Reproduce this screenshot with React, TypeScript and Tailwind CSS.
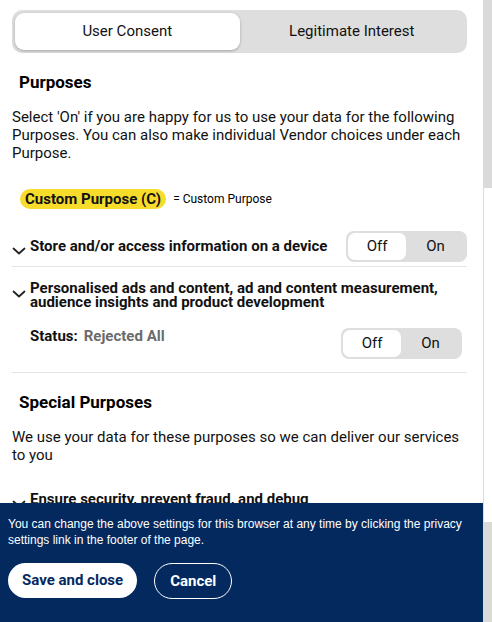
const bodyFont = "font-['Roboto',sans-serif]";

function Toggle({ className = '' }: { className?: string }) {
  return (
    <div className={`flex h-[31px] w-[121px] shrink-0 rounded-[8px] bg-[#dedede] p-[2px] ${className}`}>
      <div className="flex w-[58px] items-center justify-center rounded-[7px] bg-white text-[15px] text-[#111]">Off</div>
      <div className="flex flex-1 items-center justify-center text-[15px] text-[#111]">On</div>
    </div>
  );
}

function Chevron() {
  return (
    <svg viewBox="0 0 14 8" className="mt-[9px] h-[8px] w-[14px] shrink-0" fill="none" stroke="#222" strokeWidth={1.8} strokeLinecap="round" strokeLinejoin="round">
      <path d="M1.5 1.5 7 6.5l5.5-5" />
    </svg>
  );
}

export default function App() {
  return (
    <div className={`relative flex h-[622px] w-[492px] overflow-hidden bg-white ${bodyFont}`}>
      <div className="relative flex-1 overflow-hidden">
        <div className="pl-3 pr-4 pt-[10px]">
          {/* tabs */}
          <div className="grid h-[43px] grid-cols-2 rounded-[10px] bg-[#dedede] p-[3px]">
            <button className="rounded-[9px] bg-white text-[15px] text-[#111] shadow-[0_1px_3px_rgba(0,0,0,0.25)]">User Consent</button>
            <button className="text-[15px] text-[#111]">Legitimate Interest</button>
          </div>

          <h2 className="ml-[7px] mt-[17px] text-[17px] font-bold text-black">Purposes</h2>
          <p className="mt-[12px] text-[15px] leading-[18px] text-[#111]">
            Select 'On' if you are happy for us to use your data for the following Purposes. You can also make individual Vendor choices under each Purpose.
          </p>

          <div className="mt-[27px] flex items-center gap-[7px] pl-[8px]">
            <span className="rounded-full bg-[#f8dc2c] px-[5px] text-[15px] font-bold leading-[20px] text-[#111]">Custom Purpose (C)</span>
            <span className="text-[12px] text-black">= Custom Purpose</span>
          </div>

          {/* purpose 1 */}
          <div className="mt-[22px] flex items-center border-b border-[#e4e4e4] pb-[4px]">
            <div className="flex flex-1 items-start gap-[4px]">
              <Chevron />
              <span className="text-[15px] font-bold leading-[16px] text-[#111]">Store and/or access information on a device</span>
            </div>
            <Toggle />
          </div>

          {/* purpose 2 */}
          <div className="border-b border-[#e4e4e4] pb-[13px] pt-[14px]">
            <div className="flex items-start gap-[4px]">
              <Chevron />
              <span className="text-[15px] font-bold leading-[14px] text-[#111]">
                Personalised ads and content, ad and content measurement, audience insights and product development
              </span>
            </div>
            <div className="mt-[16px] flex items-start pl-[18px] pr-[5px]">
              <div className="flex flex-1 gap-[6px] text-[15px] font-bold">
                <span className="text-[#111]">Status:</span>
                <span className="text-[#6b6b6b]">Rejected All</span>
              </div>
              <Toggle className="mt-[3px]" />
            </div>
          </div>

          <h2 className="ml-[7px] mt-[17px] text-[17px] font-bold text-black">Special Purposes</h2>
          <p className="mt-[13px] text-[15px] leading-[18px] text-[#111]">
            We use your data for these purposes so we can deliver our services to you
          </p>

          <div className="mt-[27px] flex items-start gap-[4px]">
            <Chevron />
            <span className="text-[15px] font-bold leading-[16px] text-[#111]">Ensure security, prevent fraud, and debug</span>
          </div>
        </div>

        {/* sticky footer */}
        <div className="absolute bottom-0 left-0 right-0 h-[119px] bg-[#03295f] px-2 pt-[13px]">
          <p className="font-['Liberation_Sans',Arial,sans-serif] text-[12px] leading-[16px] text-white">
            You can change the above settings for this browser at any time by clicking the privacy settings link in the footer of the page.
          </p>
          <div className="mt-[15px] flex gap-[17px]">
            <button className="h-[35px] rounded-full bg-white px-[14px] text-[15px] font-bold text-[#03295f]">Save and close</button>
            <button className="h-[36px] rounded-full border border-white px-[15px] text-[15px] font-bold text-white">Cancel</button>
          </div>
        </div>
      </div>

      {/* scrollbar */}
      <div className="flex w-[9px] flex-col">
        <div className="h-[188px] bg-[#dadada]" />
        <div className="flex-1 border-l border-[#dcdcdc] bg-white" />
        <div className="h-[100px] bg-[#dadada]" />
      </div>
    </div>
  );
}
